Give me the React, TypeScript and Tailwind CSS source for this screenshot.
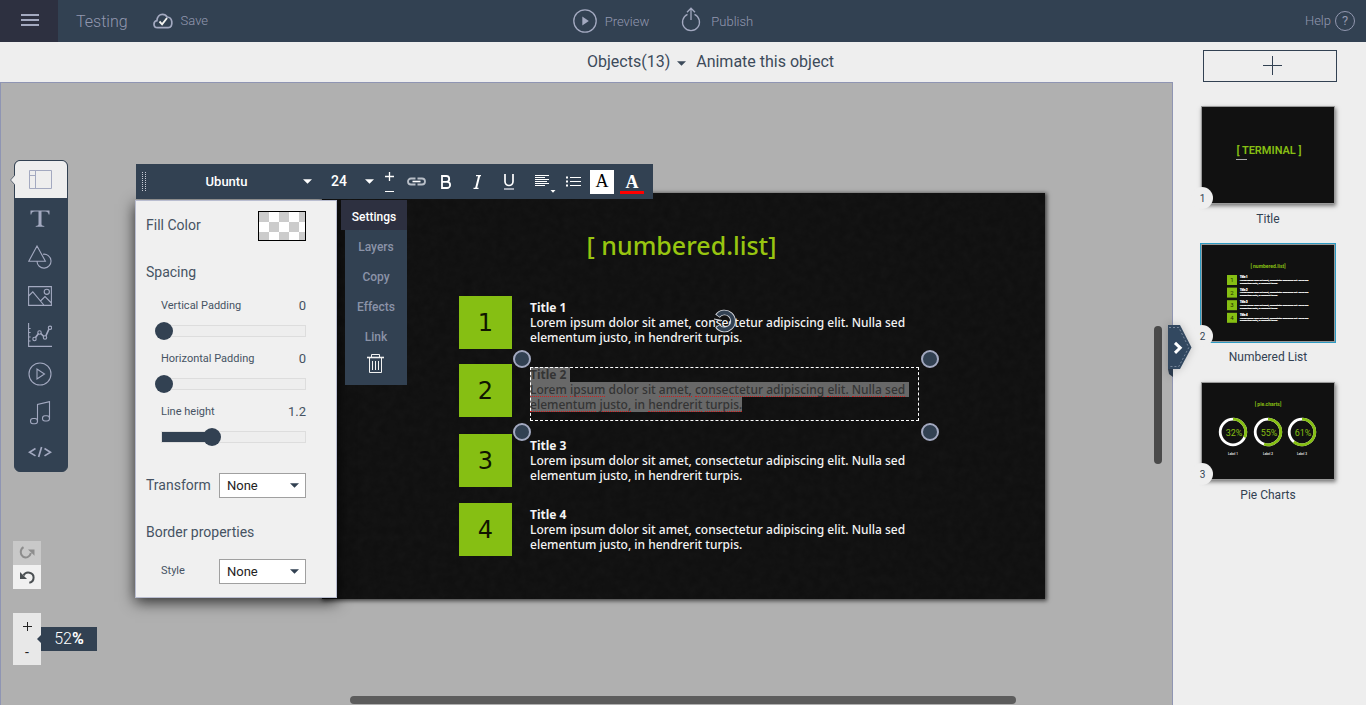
import React, { useState } from "react";

const LOREM = ["Lorem ipsum dolor sit amet, consectetur adipiscing elit. Nulla sed", "elementum justo, in hendrerit turpis."];
const KNOWN_WORDS = ["dolor", "sit", "in"];

const slideRows = [
  { n: 1, box: "top-[103px]", text: "top-[107px]" },
  { n: 2, box: "top-[171px]", text: "top-[174px]" },
  { n: 3, box: "top-[241px]", text: "top-[245px]" },
  { n: 4, box: "top-[310px]", text: "top-[314px]" },
];

function Caret({ className }: { className?: string }) {
  return (
    <svg viewBox="0 0 10 5" className={`pointer-events-none h-[5px] w-[9px] shrink-0 fill-current ${className ?? ""}`} aria-hidden="true">
      <path d="M0 0h10L5 5z" />
    </svg>
  );
}

function Header() {
  return (
    <header className="grid h-[42px] shrink-0 grid-cols-[1fr_auto_1fr] items-center bg-[#324152] text-[#9298b0]">
      <div className="flex h-full items-center">
        <button aria-label="Menu" className="flex h-full w-[58px] items-center justify-center bg-[#2d3040] pl-0.5 text-[#a3a9c0]">
          <svg viewBox="0 0 18 12" className="-mt-0.5 h-3 w-[18px] fill-current">
            <path d="M0 0h18v2H0zM0 5h18v2H0zM0 10h18v2H0z" />
          </svg>
        </button>
        <span className="ml-[18px] mt-0.5 text-[16px] font-light">Testing</span>
        <button className="ml-[25px] flex items-center gap-2 text-[13px] font-light">
          <svg viewBox="0 0 20 16" className="h-4 w-5 text-[#a3a9c0]" fill="none">
            <path d="M4.500 14.600C2.300 14.600 1 13 1 11.200c0-1.900 1.200-3.200 2.900-3.500C4.100 3.700 6.500 1.300 9.500 1.300c2.300 0 3.700 1 4.600 2.700 2.800.2 4.400 2 4.700 4.600.4 3.700-.8 6-3.600 6z" stroke="currentColor" strokeWidth="1.700" />
            <path d="M6.500 8.500l2.600 2.800L14 5" stroke="#f4f4f0" strokeWidth="1.900" />
          </svg>
          Save
        </button>
      </div>
      <div className="flex items-center gap-8 pr-10 pt-0.5 text-[13px] font-light">
        <button className="flex items-center gap-2">
          <svg viewBox="0 0 24 24" className="-mt-0.5 size-6 text-[#a3a9c0]" fill="none" stroke="currentColor" strokeWidth="1.300">
            <circle cx="12" cy="12" r="11.200" />
            <path d="M9.300 7.500v9l6.500-4.500z" fill="currentColor" stroke="none" />
          </svg>
          Preview
        </button>
        <button className="flex items-center gap-2.5">
          <svg viewBox="0 0 20 25" className="-mt-1.5 h-[25px] w-5 text-[#a3a9c0]" fill="none" stroke="currentColor" strokeWidth="1.300">
            <path d="M6.500 7.400a8.500 8.500 0 1 0 7 0M10 13V1.500M6 5.200l4-4 4 4" />
          </svg>
          Publish
        </button>
      </div>
      <a href="#help" className="flex items-center justify-end gap-1 pr-[11px] text-[13px] font-light">
        Help
        <span className="flex size-5 items-center justify-center rounded-full border border-current text-[13px] font-normal">?</span>
      </a>
    </header>
  );
}

const toolIcons: { label: string; icon: React.ReactNode }[] = [
  {
    label: "Text",
    icon: (
      <path d="M2.500 4.500h19v4h-.9c-.3-2-1.300-2.900-3.500-2.900h-3.600V18c0 1.300.5 1.700 2.800 1.900v.8H7.700v-.8c2.300-.2 2.800-.6 2.800-1.900V5.600H6.900C4.700 5.600 3.700 6.500 3.400 8.500h-.9z" fill="currentColor" stroke="none" />
    ),
  },
  { label: "Shapes", icon: <path d="M9 1L.8 16.200h16.600zM15 9.200a7 7 0 1 1-6 7" /> },
  {
    label: "Images",
    icon: (
      <>
        <path d="M.6 2.600h22.800v18.800H.6zM.6 12l4.200-4.200 11 13.200M12.500 17l4.500-4.500 6.400 6.500" />
        <circle cx="18.800" cy="7.800" r="2.600" />
      </>
    ),
  },
  {
    label: "Charts",
    icon: (
      <>
        <path d="M.6 0v23.400H24M.6 5.500h2M.6 9.500h2M.6 14h2M.6 18h2" />
        <path d="M7.500 14.500l3-4M12.800 10.500l3 3M17.800 13l3.200-7" strokeWidth="1.700" />
        <circle cx="6.500" cy="16" r="1.700" />
        <circle cx="11.500" cy="9.500" r="1.700" />
        <circle cx="17" cy="14.500" r="1.700" />
        <circle cx="22" cy="4.800" r="1.700" />
      </>
    ),
  },
  {
    label: "Video",
    icon: (
      <>
        <circle cx="12" cy="12" r="11" />
        <path d="M9 7v10l7.500-5z" />
      </>
    ),
  },
  {
    label: "Music",
    icon: (
      <>
        <path d="M9.500 20.500V3.500L21.500.6v17" />
        <rect x="2.500" y="17.500" width="7" height="5.200" rx="2.500" />
        <rect x="14.500" y="14.800" width="7" height="5.200" rx="2.500" />
      </>
    ),
  },
  { label: "Code", icon: <path d="M7.500 8.500l-6 3.700 6 3.700M16.500 8.500l6 3.700-6 3.700M13.600 7l-3 10" strokeWidth="1.700" /> },
];

function ToolRail() {
  return (
    <nav aria-label="Insert" className="ml-px w-[54px] rounded-md border border-[#324152] bg-[#324152] text-[#a3a9c0]">
      <button aria-label="Layouts" className="relative flex h-[37px] w-full items-center justify-center rounded-t-[5px] bg-[#eee] pr-0.5">
        <svg viewBox="0 0 5 10" className="absolute -left-[5px] top-[14px] h-[10px] w-[5px]">
          <path d="M5 0v10L0 5z" fill="#eee" />
          <path d="M5 0L.5 5 5 10" fill="none" stroke="#56606e" />
        </svg>
        <svg viewBox="0 0 23 19" className="h-[19px] w-[23px]" fill="none" stroke="currentColor">
          <path d="M.5.5h22v18H.5zM6.500.5v18M.5 5.500h6" />
        </svg>
      </button>
      {toolIcons.map((t) => (
        <button key={t.label} aria-label={t.label} className="flex h-[39px] w-full items-center justify-center pr-0.5">
          <svg viewBox="0 0 24 24" className="size-6" fill="none" stroke="currentColor" strokeWidth="1.100">
            {t.icon}
          </svg>
        </button>
      ))}
    </nav>
  );
}

function Slide() {
  return (
    <section aria-label="Slide" className="relative h-[406px] w-[723px] shrink-0 bg-[#0f0f0f] shadow-[1px_1px_4px_1px_rgba(0,0,0,0.6)]">
      <svg className="absolute inset-0 size-full opacity-[0.03]" aria-hidden="true">
        <filter id="grain">
          <feTurbulence type="fractalNoise" baseFrequency="0.12" numOctaves="3" />
          <feColorMatrix type="saturate" values="0" />
        </filter>
        <rect width="100%" height="100%" filter="url(#grain)" />
      </svg>
      <h1 className="absolute left-0 right-0 top-[34px] pr-1 text-center font-['Noto_Sans',sans-serif] text-[25px] font-medium leading-9 text-[#98c510]">[ numbered.list]</h1>
      {slideRows.map((r) => (
        <React.Fragment key={r.n}>
          <div className={`absolute left-[137px] flex size-[53px] items-center justify-center bg-[#86bf13] font-['DejaVu_Sans',sans-serif] text-[24px] text-[#101500] ${r.box}`}>{r.n}</div>
          <div className={`absolute left-[208px] whitespace-nowrap font-['Noto_Sans',sans-serif] text-[12px] font-medium leading-[15px] ${r.text} ${r.n === 2 ? "text-[#343434]" : "text-[#f4f4f4]"}`}>
            {r.n === 2 ? (
              <>
                <mark className="block w-fit bg-[#686868] pr-1 font-bold text-inherit">Title 2</mark>
                {LOREM.map((line, i) => (
                  <mark key={line} className={`block h-[15px] w-fit bg-[#686868] text-inherit ${i === 0 ? "pr-1" : ""}`}>
                    {line.split(" ").map((w, j) => (
                      <React.Fragment key={j}>
                        {j > 0 && " "}
                        <span className={KNOWN_WORDS.includes(w) ? "" : "inline-block h-[15px] border-b border-dotted border-[#d02020] align-top"}>{w}</span>
                      </React.Fragment>
                    ))}
                  </mark>
                ))}
              </>
            ) : (
              <>
                <div className="font-bold">Title {r.n}</div>
                {LOREM.map((line) => (
                  <div key={line}>{line}</div>
                ))}
              </>
            )}
          </div>
        </React.Fragment>
      ))}
      <div className="absolute left-[208px] top-[174px] h-[54px] w-[389px] border border-dashed border-white">
        {["-left-[18px] -top-[18px]", "-right-[21px] -top-[18px]", "-bottom-[21px] -left-[18px]", "-bottom-[21px] -right-[21px]"].map((p) => (
          <span key={p} className={`absolute size-[18px] rounded-full border-2 border-[#a3a9c0] bg-[#324152] ${p}`} />
        ))}
        <svg viewBox="0 0 24 24" className="absolute -top-[59px] left-[182px] size-6" fill="none">
          <path d="M4.500 7.200A8.500 8.500 0 1 1 4.500 16.800" stroke="#d4d6dc" strokeWidth="5.600" />
          <path d="M5 6.600A8.500 8.500 0 1 1 5 17.400" stroke="#324152" strokeWidth="3.800" />
          <path d="M1 10l8 1.500" stroke="#d4d6dc" strokeWidth="1.200" />
        </svg>
      </div>
    </section>
  );
}

function TextToolbar() {
  return (
    <div role="toolbar" aria-label="Text formatting" className="absolute left-[135px] top-[81px] flex h-[35px] w-[517px] items-center bg-[#324152] text-white">
      <svg viewBox="0 0 4 20" className="ml-1.5 h-5 w-1 shrink-0" stroke="#c8ccd6" strokeDasharray="1 1">
        <path d="M.5 0v20M3.500 0v20" />
      </svg>
      <div className="relative ml-4 flex w-[150px] items-center">
        <select aria-label="Font" className="w-full appearance-none bg-transparent pr-[21px] text-center text-[13px] font-medium outline-none">
          <option>Ubuntu</option>
        </select>
        <Caret className="absolute right-0" />
      </div>
      <div className="relative ml-[19px] flex w-[43px] items-center">
        <select aria-label="Font size" defaultValue="24" className="w-full appearance-none bg-transparent text-[14px] font-medium outline-none">
          <option>24</option>
          <option>32</option>
        </select>
        <Caret className="absolute right-0" />
      </div>
      <div className="ml-2.5 flex h-full w-2.5 flex-col items-center justify-between pb-1.5 pt-2">
        <button aria-label="Larger">
          <svg viewBox="0 0 9 9" className="size-[9px]" stroke="currentColor"><path d="M4.500 0v9M0 4.500h9" strokeWidth="1.300" /></svg>
        </button>
        <button aria-label="Smaller">
          <svg viewBox="0 0 9 3" className="h-[3px] w-[9px]" stroke="currentColor"><path d="M0 1.500h9" /></svg>
        </button>
      </div>
      <button aria-label="Insert link" className="ml-3">
        <svg viewBox="0 0 21 9" className="h-[9px] w-[21px]" fill="none">
          <path d="M9.500 1.500H5a3 3 0 0 0 0 6h4.500M11.500 1.500H16a3 3 0 0 1 0 6h-4.500" stroke="#b9bfc8" strokeWidth="1.800" />
          <path d="M6.500 4.500h8" stroke="#fff" strokeWidth="1.600" />
        </svg>
      </button>
      <button aria-label="Bold" className="ml-3 w-3.5">
        <svg viewBox="0 0 12 14" className="mx-auto h-3.5 w-3" fill="none" stroke="currentColor" strokeWidth="1.800">
          <path d="M2 1h4.300a2.900 2.900 0 0 1 0 5.800H2zM2 6.800h5a3.100 3.100 0 0 1 0 6.200H2z" />
        </svg>
      </button>
      <button aria-label="Italic" className="ml-[18px] w-3">
        <svg viewBox="0 0 9 14" className="mx-auto h-3.5 w-[9px]" fill="none" stroke="currentColor">
          <path d="M3 .6h5M.5 13.400h5" strokeWidth="1.100" />
          <path d="M6.300.6l-3.300 12.800" strokeWidth="2" />
        </svg>
      </button>
      <button aria-label="Underline" className="ml-5 w-3">
        <svg viewBox="0 0 12 16" className="h-4 w-3" fill="none">
          <path d="M2 0v7.500a3.800 3.800 0 0 0 8 0V0" stroke="currentColor" strokeWidth="1.700" />
          <path d="M1 15h10" stroke="#a3a9b5" strokeWidth="2" />
        </svg>
      </button>
      <button aria-label="Align" className="ml-[19px] mt-1 w-[22px]">
        <svg viewBox="0 0 22 18" className="h-[18px] w-[22px]" fill="none" stroke="currentColor">
          <path d="M1 .5h14M1 2.500h10M1 4.500h14M1 6.500h12M1 8.500h14M1 10.500h10" />
          <path d="M16.500 15h5l-2.500 2.800z" fill="currentColor" stroke="none" />
        </svg>
      </button>
      <button aria-label="Bulleted list" className="ml-2.5 w-4">
        <svg viewBox="0 0 15 11" className="h-[11px] w-[15px]" stroke="currentColor">
          <path d="M4 1.500h11M4 5.500h11M4 9.500h11" />
          <path d="M0 1.500h2M0 5.500h2M0 9.500h2" strokeWidth="2" />
        </svg>
      </button>
      <button aria-label="Highlight colour" className="ml-2 flex h-6 w-6 items-center justify-center bg-white font-['Liberation_Serif',serif] text-[18px] text-black">A</button>
      <button aria-label="Text colour" className="ml-1.5 flex h-6 w-6 items-center justify-center border-b-[3px] border-[#f00] pt-1 font-['Liberation_Serif',serif] text-[18px] font-bold">A</button>
    </div>
  );
}

function Slider({ label, max, step, initial }: { label: string; max: number; step: number; initial: number }) {
  const [value, setValue] = useState(initial);
  const id = label.toLowerCase().replace(" ", "-");
  return (
    <div className="ml-[15px] h-[53px]">
      <div className="flex items-center justify-between">
        <label htmlFor={id} className="text-[11px] leading-4">{label}</label>
        <output htmlFor={id} className="text-[13px] leading-4">{value}</output>
      </div>
      <div className="relative mt-[11px] h-3 w-full border border-[#ddd] bg-[#eee]">
        <div className="h-full bg-[#324152]" style={{ width: `${(value / max) * 100}%` }} />
        <input
          id={id}
          type="range"
          min={0}
          max={max}
          step={step}
          value={value}
          onChange={(e) => setValue(Number(e.target.value))}
          className="absolute -left-[7px] -top-1 h-[18px] w-[154px] appearance-none bg-transparent [&::-webkit-slider-thumb]:size-[18px] [&::-webkit-slider-thumb]:appearance-none [&::-webkit-slider-thumb]:rounded-full [&::-webkit-slider-thumb]:bg-[#324152]"
        />
      </div>
    </div>
  );
}

function PanelSelect({ label, small }: { label: string; small?: boolean }) {
  return (
    <label className="flex items-center justify-between">
      <span className={small ? "ml-[15px] text-[11px]" : "text-[14px]"}>{label}</span>
      <span className="relative flex w-[87px] items-center">
        <select className="h-[25px] w-full appearance-none border border-[#a0a0a0] bg-white pl-[7px] text-[13px] text-[#222] outline-none">
          <option>None</option>
        </select>
        <Caret className="absolute right-[7px] text-[#324152]" />
      </span>
    </label>
  );
}

function SettingsPanel() {
  return (
    <section aria-label="Settings" className="absolute left-[134px] top-[117px] h-[398px] w-[202px] border border-[#b9bdd0] bg-[#f0f0f0] pl-[10px] pr-[30px] pt-2.5 text-[#465363] shadow-[0_4px_14px_rgba(0,0,0,0.75)]">
      <div className="flex items-start justify-between">
        <span className="mt-1 text-[14px] leading-5">Fill Color</span>
        <button aria-label="Fill color" className="h-[30px] w-12 border border-black bg-[repeating-conic-gradient(#fff_0_25%,#ccc_0_50%)] bg-[length:20px_20px]" />
      </div>
      <h2 className="mt-[21px] text-[14px] leading-5">Spacing</h2>
      <div className="mt-4">
        <Slider label="Vertical Padding" max={100} step={1} initial={0} />
        <Slider label="Horizontal Padding" max={100} step={1} initial={0} />
        <Slider label="Line height" max={3.4} step={0.1} initial={1.2} />
      </div>
      <div className="mt-4">
        <PanelSelect label="Transform" />
      </div>
      <h2 className="mt-6 text-[14px] leading-5">Border properties</h2>
      <div className="mt-[17px]">
        <PanelSelect label="Style" small />
      </div>
    </section>
  );
}

function SettingsTabs() {
  return (
    <div className="absolute left-[340px] top-[117px] flex w-[66px] flex-col text-[12px]">
      <button className="h-[30px] bg-[#2d3040] pt-1 font-medium text-white">Settings</button>
      <div className="ml-1 flex h-[155px] flex-col bg-[#324152] text-[#8b93a8]">
        {["Layers", "Copy", "Effects", "Link"].map((t) => (
          <button key={t} className="h-[30px] pt-1 font-medium">{t}</button>
        ))}
        <button aria-label="Delete" className="mx-auto mt-1 pr-0.5">
          <svg viewBox="0 0 17 19" className="h-[19px] w-[17px]" fill="none" stroke="#f2f2f2">
            <path d="M0 3.500h17" strokeWidth="1.600" />
            <path d="M4.500 3V.5h8V3M2.500 4v14.500h12V4M5.500 7v9M8.500 7v9M11.500 7v9" />
          </svg>
        </button>
      </div>
    </div>
  );
}

function HistoryControls() {
  return (
    <div className="mt-[69px] flex w-7 flex-col">
      <button aria-label="Redo" disabled className="flex h-6 items-center justify-center bg-[#c8c8c8] text-[#8d8d8d]">
        <svg viewBox="0 0 16 14" className="h-3.5 w-4" fill="none" stroke="currentColor" strokeWidth="2">
          <path d="M4.500 1.200C.8 3.500 1 8.500 4 10.600c2.800 1.900 6.800.8 7.900-3.600" />
          <path d="M9 3.500h6.500v6.200z" fill="currentColor" stroke="none" />
        </svg>
      </button>
      <button aria-label="Undo" className="flex h-6 items-center justify-center bg-[#f0f0f0] text-[#4a4f52]">
        <svg viewBox="0 0 16 14" className="h-3.5 w-4" fill="none" stroke="currentColor" strokeWidth="2">
          <path d="M4.500 5.500C6.800.8 14.600 2 14.600 7.500c0 2.700-1.700 4.700-4.300 5.200" />
          <path d="M1 2v7h7z" fill="currentColor" stroke="none" />
        </svg>
      </button>
    </div>
  );
}

function ZoomControls() {
  return (
    <div className="relative mt-6 flex w-7 flex-col bg-[#e8e8e8] text-[14px] text-[#222]">
      <button aria-label="Zoom in" className="flex h-[26px] items-center justify-center">
        <svg viewBox="0 0 9 9" className="size-[9px]" stroke="currentColor"><path d="M4.500 0v9M0 4.500h9" /></svg>
      </button>
      <button aria-label="Zoom out" className="h-[26px]">-</button>
      <div className="absolute left-7 top-3.5 flex h-6 w-14 items-center justify-center bg-[#324152] text-[16px] text-white">
        <svg viewBox="0 0 4 8" className="absolute -left-1 top-2 h-2 w-1" fill="#324152"><path d="M4 0v8L0 4z" /></svg>
        <span className="font-light">52</span>
        <span className="font-bold">%</span>
      </div>
    </div>
  );
}

function TitleThumb() {
  return (
    <svg viewBox="0 0 132 96" className="block size-full">
      <text x="67" y="47" textAnchor="middle" fontSize="11" fontWeight="600" fill="#86bf13">[ TERMINAL ]</text>
      <path d="M34 52.500h11" stroke="#aaa" />
    </svg>
  );
}

function ListThumb() {
  return (
    <svg viewBox="0 0 132 96" className="block size-full">
      <text x="66" y="22.500" textAnchor="middle" fontSize="5" fontWeight="700" fill="#86bf13">[ numbered.list]</text>
      {[1, 2, 3, 4].map((n, i) => (
        <g key={n} transform={`translate(0 ${i * 12.6})`}>
          <rect x="25" y="30" width="10" height="10" fill="#86bf13" />
          <text x="30" y="37" textAnchor="middle" fontSize="6" fill="#1b2a00">{n}</text>
          <text x="38" y="33" fontSize="2.600" fontWeight="900" fill="#fff" stroke="#fff" strokeWidth=".2">Title {n}</text>
          <text x="38" y="35.800" fontSize="2.300" fontWeight="900" fill="#fff" stroke="#fff" strokeWidth=".2">{LOREM[0]}</text>
          <text x="38" y="38.600" fontSize="2.300" fontWeight="900" fill="#fff" stroke="#fff" strokeWidth=".2">{LOREM[1]}</text>
        </g>
      ))}
    </svg>
  );
}

function PieThumb() {
  const pies = [
    { x: 31, v: 32 },
    { x: 66, v: 55 },
    { x: 100, v: 61 },
  ];
  return (
    <svg viewBox="0 0 132 96" className="block size-full">
      <text x="66" y="22.500" textAnchor="middle" fontSize="5" fontWeight="700" fill="#86bf13">[ pie.charts]</text>
      {pies.map((p, i) => (
        <g key={p.v}>
          <circle cx={p.x} cy="49" r="12.800" fill="none" stroke="#fff" strokeWidth="2.800" />
          <circle cx={p.x} cy="49" r="12.800" fill="none" stroke="#86bf13" strokeWidth="2.800" pathLength="100" strokeDasharray={`${p.v} 100`} transform={`rotate(-90 ${p.x} 49)`} />
          <text x={p.x + 1} y="52.500" textAnchor="middle" fontSize="9" fill="#86bf13">{p.v}%</text>
          <text x={p.x} y="71.500" textAnchor="middle" fontSize="3" fontWeight="900" fill="#ccc">Label {i + 1}</text>
        </g>
      ))}
    </svg>
  );
}

const thumbs = [
  { name: "Title", drawing: <TitleThumb />, selected: false },
  { name: "Numbered List", drawing: <ListThumb />, selected: true },
  { name: "Pie Charts", drawing: <PieThumb />, selected: false },
];

function SlideList() {
  return (
    <aside className="w-[193px] shrink-0 bg-[#eee] pl-7 pr-[31px] pt-2 text-[#324152]">
      <button aria-label="Add slide" className="ml-0.5 flex h-8 w-[134px] items-center justify-center border border-[#324152] pb-px">
        <svg viewBox="0 0 19 19" className="ml-1 size-[19px]" stroke="currentColor"><path d="M9.500 0v19M0 9.500h19" /></svg>
      </button>
      <ol className="mt-6 flex flex-col gap-3">
        {thumbs.map((t, i) => (
          <li key={t.name} className="h-[126px]">
            <a href={`#slide-${i + 1}`} className="relative block">
              <span className={`block h-[98px] w-[134px] border border-[#999] bg-[#111] ${t.selected ? "outline outline-[#2b9bc4]" : "shadow-[1px_2px_4px_rgba(0,0,0,0.5)]"}`}>{t.drawing}</span>
              <span className="absolute -left-2.5 top-[81px] flex size-[22px] items-center justify-center rounded-full bg-[#eee] pl-px text-[10px]">{i + 1}</span>
              <span className="block w-[134px] pt-[7px] text-center text-[12px] leading-4">{t.name}</span>
            </a>
          </li>
        ))}
      </ol>
    </aside>
  );
}

export default function App() {
  return (
    <div className="flex h-screen flex-col overflow-hidden bg-[#eee] font-[Roboto,sans-serif]">
      <Header />
      <div className="flex min-h-0 flex-1">
        <main className="relative flex min-w-0 flex-1 flex-col">
          <div className="flex h-10 shrink-0 items-center text-[16px] text-[#3c4a5a]">
            <div className="flex-1" />
            <div className="flex flex-1 items-center gap-2.5 pl-px">
              <button className="flex items-center gap-[7px]">
                Objects(13)
                <Caret className="mt-0.5" />
              </button>
              <button>Animate this object</button>
            </div>
          </div>
          <div className="relative flex min-h-0 flex-1 border border-b-0 border-[#8f95b3] bg-[#b0b0b0]">
            <div className="flex w-[321px] shrink-0 flex-col pl-3 pt-[77px]">
              <ToolRail />
              <HistoryControls />
              <ZoomControls />
            </div>
            <div className="pt-[110px]">
              <Slide />
            </div>
            <SettingsPanel />
            <SettingsTabs />
            <TextToolbar />
            <div className="absolute bottom-[241px] right-[10px] h-[138px] w-2 rounded-full bg-[#4a4a4a]" />
            <div className="absolute bottom-px left-[349px] right-[156px] h-2 rounded-full bg-[#5c5c5c]" />
            <button aria-label="Toggle slide list" className="absolute -right-5 top-[242px] z-10 drop-shadow-[0_0_4px_rgba(0,0,0,0.2)]">
              <svg viewBox="0 0 24 52" className="h-[52px] w-6" fill="none">
                <path d="M0 44h5v8L1 49z" fill="#2b3a4c" />
                <path d="M0 0h12l11.500 22.500L12 44H0z" fill="#324860" />
                <path d="M1 2.500h9.800l10 20-10 19H1" stroke="#8b99ab" strokeWidth=".8" strokeDasharray="2 2" />
                <path d="M7 17.800l5.200 5-5.200 5" stroke="#fff" strokeWidth="3" />
              </svg>
            </button>
          </div>
        </main>
        <SlideList />
      </div>
    </div>
  );
}
